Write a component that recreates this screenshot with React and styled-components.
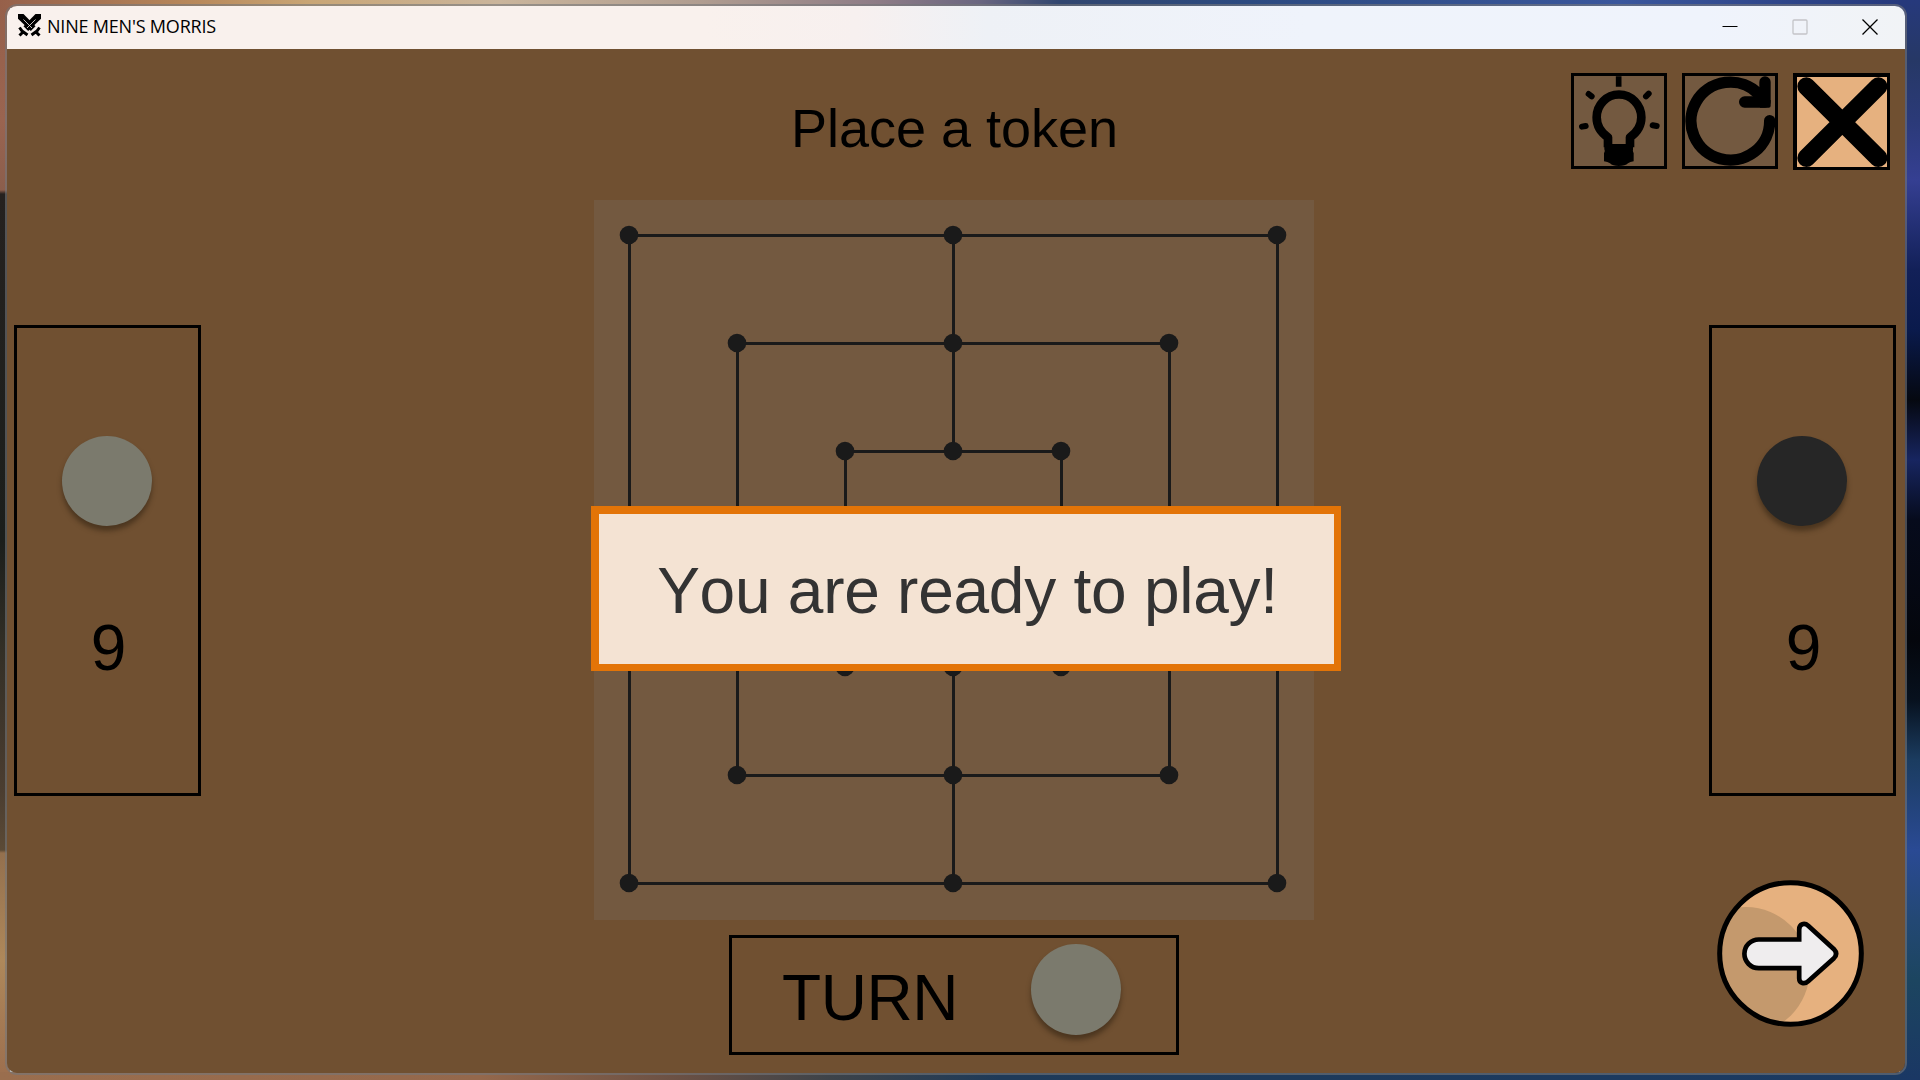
import React from "react";
import styled, { createGlobalStyle } from "styled-components";

const GlobalStyle = createGlobalStyle`
  * { box-sizing: border-box; }
  body { margin: 0; overflow: hidden; font-family: "Liberation Sans", Arial, sans-serif; }
`;

const Desktop = styled.div`
  width: 1920px;
  height: 1080px;
  padding: 4px 13px 5px 5px;
  background:
    linear-gradient(90deg, #96604a 0, #b98a5c 200px, #c9a676 310px, #cab59c 500px, #b09d90 700px, #8d7b86 880px, #6a6680 980px, #31466f 1060px, #2c4a80 1250px, #3a569c 1620px, #26397c 1900px) 0 0 / 1900px 8px no-repeat,
    linear-gradient(90deg, #9a6e4e 0, #94684c 480px, #6a5044 680px, #3d4349 830px, #1e3a58 1000px, #1b3a62 1900px) 0 1072px / 1900px 8px no-repeat,
    linear-gradient(180deg, #96604a 0, #9a6450 120px, #8b5e4c 190px, #25211f 194px, #1b1e1b 540px, #332f26 650px, #4b3d30 790px, #5b4a36 850px, #94704e 853px, #ae885a 960px, #9c6e4e 1080px) 0 0 / 10px 1080px no-repeat,
    linear-gradient(180deg, #26397c 0, #263866 60px, #2b3a78 120px, #353f92 180px, #122058 270px, #0a1a4c 330px, #050810 400px, #172560 460px, #060b1c 520px, #04060c 640px, #07111e 700px, #1b3c60 760px, #2a4a94 850px, #234874 920px, #1c4560 980px, #1a3764 1080px) 1900px 0 / 20px 1080px no-repeat;
`;

const Window = styled.main`
  position: relative;
  display: flex;
  flex-direction: column;
  height: 1071px;
  border: 2px solid rgba(116, 118, 122, 0.6);
  border-radius: 12px;
  overflow: hidden;
`;

const TitleBar = styled.header`
  display: flex;
  align-items: flex-start;
  justify-content: space-between;
  flex: 0 0 43px;
  padding: 8px 27px 0 11px;
  background: linear-gradient(90deg, #f9f1ed 0, #f9f1ed 700px, #f7f0ef 850px, #eef1f6 980px, #eff3fb 1300px, #eff3fc 1700px, #f1f3f6 1898px);
`;

const TitleGroup = styled.div`
  display: flex;
  align-items: flex-start;
  gap: 6px;
  color: #000;
`;

const Swords = styled.svg`
  display: block;
  width: 23px;
  height: 23px;
`;

const Title = styled.span`
  font: 400 18px/24px "Open Sans", "Noto Sans", sans-serif;
  letter-spacing: -0.2px;
  white-space: nowrap;
`;

const Controls = styled.div`
  display: flex;
  gap: 54px;
  padding-top: 5px;
`;

const ControlIcon = styled.svg`
  display: block;
  width: 16px;
  height: 16px;
  fill: none;
  stroke: ${({ $muted }) => ($muted ? "#c3c4c8" : "#000")};
  stroke-width: ${({ $w }) => $w || 1};
`;

const Client = styled.section`
  display: grid;
  flex: 1;
  grid-template-columns: 587px 720px 591px;
  background: #705031;
`;

const Side = styled.div`
  display: flex;
  flex-direction: column;
  align-items: ${({ $end }) => ($end ? "flex-end" : "flex-start")};
  padding: ${({ $end }) => ($end ? "24px 0 0" : "276px 0 0 7px")};
`;

const Center = styled.div`
  display: flex;
  flex-direction: column;
  align-items: center;
`;

const Heading = styled.h1`
  margin: 0;
  height: 151px;
  padding: 48px 0 0 1px;
  font-size: 54px;
  line-height: 62px;
  font-weight: 400;
  color: #000;
  white-space: nowrap;
`;

const BoardSvg = styled.svg`
  display: block;
  width: 720px;
  height: 720px;
  background: #735940;
  stroke: #1a1a1a;
  stroke-width: 3;
  fill: none;
`;

const TurnBox = styled.div`
  display: flex;
  width: 450px;
  height: 120px;
  margin-top: 15px;
  padding: 6px 0 0 50px;
  border: 3px solid #000;
`;

const TurnLabel = styled.span`
  width: 249px;
  padding-top: 17px;
  font-size: 64px;
  line-height: 74px;
  letter-spacing: -0.4px;
  color: #000;
`;

const Token = styled.div`
  width: 90px;
  height: ${({ $tall }) => ($tall ? 91 : 90)}px;
  border-radius: 50%;
  background: ${({ $dark }) => ($dark ? "#262626" : "#7b7a6d")};
  box-shadow: 0 5px 5px rgba(40, 28, 14, 0.5);
`;

const Reserve = styled.section`
  display: flex;
  flex-direction: column;
  align-items: center;
  width: 187px;
  height: 471px;
  margin: ${({ $margin }) => $margin || 0};
  padding: 108px 2px 0 0;
  border: 3px solid #000;
`;

const Count = styled.span`
  margin: 85px 0 0 4px;
  font-size: 64px;
  line-height: 74px;
  color: #000;
`;

const Toolbar = styled.nav`
  display: flex;
  gap: 15px;
  height: 97px;
  margin-right: 15px;
`;

const ToolButton = styled.button`
  display: block;
  width: ${({ $active }) => ($active ? 97 : 96)}px;
  height: ${({ $active }) => ($active ? 97 : 96)}px;
  padding: 0;
  border: solid #000;
  border-width: ${({ $active }) => ($active ? "4px 3px 3px 4px" : "3px")};
  background: ${({ $active }) => ($active ? "#e6b17f" : "#735940")};
`;

const ToolIcon = styled.svg`
  display: block;
  width: 90px;
  height: 90px;
  fill: none;
  stroke: #000;
  stroke-linecap: round;
`;

const NextButton = styled.button`
  width: 147px;
  height: 147px;
  margin: 84px 41px 0 0;
  padding: 0;
  border: 0;
  background: none;
`;

const NextIcon = styled.svg`
  display: block;
  width: 147px;
  height: 147px;
`;

const Popup = styled.div`
  position: absolute;
  left: 584px;
  top: 500px;
  display: flex;
  justify-content: center;
  width: 750px;
  height: 165px;
  padding: 40px 0 0 2px;
  border: solid #e37407;
  border-width: 8px 7px 7px 8px;
  background: #f4e3d3;
  color: #333;
  font-size: 64px;
  line-height: 74px;
  font-kerning: none;
  letter-spacing: -0.25px;
  white-space: nowrap;
`;

const POINTS = [0, 1, 2].flatMap((ring) => {
  const near = 35 + ring * 108;
  const far = 683 - ring * 108;
  const mid = 359;
  return [
    [near, near], [mid, near], [far, near],
    [near, mid], [far, mid],
    [near, far], [mid, far], [far, far],
  ];
});

function Board() {
  return (
    <BoardSvg viewBox="0 0 720 720">
      <rect x="35.5" y="35.5" width="648" height="648" />
      <rect x="143.5" y="143.5" width="432" height="432" />
      <rect x="251.5" y="251.5" width="216" height="216" />
      <path d="M359.5 35.5V251.5M359.5 467.5V683.5M35.5 359.5H251.5M467.5 359.5H683.5" />
      {POINTS.map(([x, y]) => (
        <circle key={`${x}-${y}`} cx={x} cy={y} r="9.3" fill="#1a1a1a" stroke="none" />
      ))}
    </BoardSvg>
  );
}

function SwordsIcon() {
  return (
    <Swords viewBox="0 0 23 23">
      <path d="M0 0H5.500L17.500 12.300L12.800 17L0 4.700Z" />
      <path d="M23 0H17.500L5.500 12.300L10.200 17L23 4.700Z" />
      <path d="M5.500 5.500L14 14M17.500 5.500L9 14" stroke="#f9f1ed" strokeWidth="0.8" fill="none" />
      <path d="M1.500 13.500L4 17L9.500 21M21.500 13.500L19 17L13.500 21M6 17L1.500 21.500M17 17L21.500 21.500" stroke="#000" strokeWidth="3" fill="none" />
    </Swords>
  );
}

function BulbIcon() {
  return (
    <ToolIcon viewBox="102 228 270 270">
      <path strokeWidth="26" strokeLinecap="butt" strokeLinejoin="round" d="M204 442V412C181 397 170 377 170 352A66.500 68 0 0 1 304 352C304 377 292 397 270 412V442" />
      <path stroke="none" fill="#000" d="M193 426L212 432H262L279 426V448Q277 455 281 460V484Q270 486 264 490Q256 498 236 498Q218 498 210 490Q203 486 192 484V460Q197 455 193 448Z" />
      <path strokeWidth="17" strokeLinecap="butt" d="M236 229V260" />
      <path strokeWidth="18" d="M146 282L155 289M318 289L326 281M126 380L137 378M338 376L350 378" />
    </ToolIcon>
  );
}

function RestartIcon() {
  return (
    <ToolIcon viewBox="435 228 270 270">
      <path strokeWidth="34" d="M689 362A118 117 0 1 1 655 281" />
      <path strokeWidth="34" strokeLinejoin="round" d="M675 246V306H614" />
      <path stroke="none" fill="#000" d="M635 262L665 262V300H692V318Q692 323 686 323H660V292Z" />
    </ToolIcon>
  );
}

function CloseIcon() {
  return (
    <ToolIcon viewBox="771 231 270 270">
      <path strokeWidth="54" d="M799 259L1015 474M1015 259L799 474" />
    </ToolIcon>
  );
}

function NextArrow() {
  return (
    <NextIcon viewBox="111 90 440 440">
      <defs>
        <clipPath id="disc"><circle cx="331" cy="310" r="212" /></clipPath>
      </defs>
      <circle cx="331" cy="310" r="212" fill="#e6b17f" />
      <circle cx="198" cy="361" r="190" fill="#c4996d" clipPath="url(#disc)" />
      <circle cx="331" cy="310" r="212" fill="none" stroke="#000" strokeWidth="15" />
      <path
        d="M236 268H357V238C357 221 373 217 384 227L461 297Q474 311 461 324L384 393C373 403 357 400 357 384V354H236A43 43 0 0 1 236 268Z"
        fill="#efedee"
        stroke="#000"
        strokeWidth="14"
      />
    </NextIcon>
  );
}

export default function App() {
  return (
    <>
      <GlobalStyle />
      <Desktop>
        <Window>
          <TitleBar>
            <TitleGroup>
              <SwordsIcon />
              <Title>NINE MEN'S MORRIS</Title>
            </TitleGroup>
            <Controls>
              <ControlIcon viewBox="0 0 16 16"><path d="M.5 7.500H15.500" /></ControlIcon>
              <ControlIcon viewBox="0 0 16 16" $muted $w={1.3}><rect x="1" y="1" width="14" height="14" rx="1" /></ControlIcon>
              <ControlIcon viewBox="0 0 16 16" $w={1.3}><path d="M.5.5L15.500 15.500M15.500.5L.5 15.500" /></ControlIcon>
            </Controls>
          </TitleBar>
          <Client>
            <Side>
              <Reserve>
                <Token />
                <Count>9</Count>
              </Reserve>
            </Side>
            <Center>
              <Heading>Place a token</Heading>
              <Board />
              <TurnBox>
                <TurnLabel>TURN</TurnLabel>
                <Token $tall />
              </TurnBox>
            </Center>
            <Side $end>
              <Toolbar>
                <ToolButton aria-label="Hint"><BulbIcon /></ToolButton>
                <ToolButton aria-label="Restart"><RestartIcon /></ToolButton>
                <ToolButton aria-label="Close" $active><CloseIcon /></ToolButton>
              </Toolbar>
              <Reserve $margin="155px 9px 0 0">
                <Token $dark />
                <Count>9</Count>
              </Reserve>
              <NextButton aria-label="Next"><NextArrow /></NextButton>
            </Side>
          </Client>
          <Popup role="dialog">You are ready to play!</Popup>
        </Window>
      </Desktop>
    </>
  );
}
